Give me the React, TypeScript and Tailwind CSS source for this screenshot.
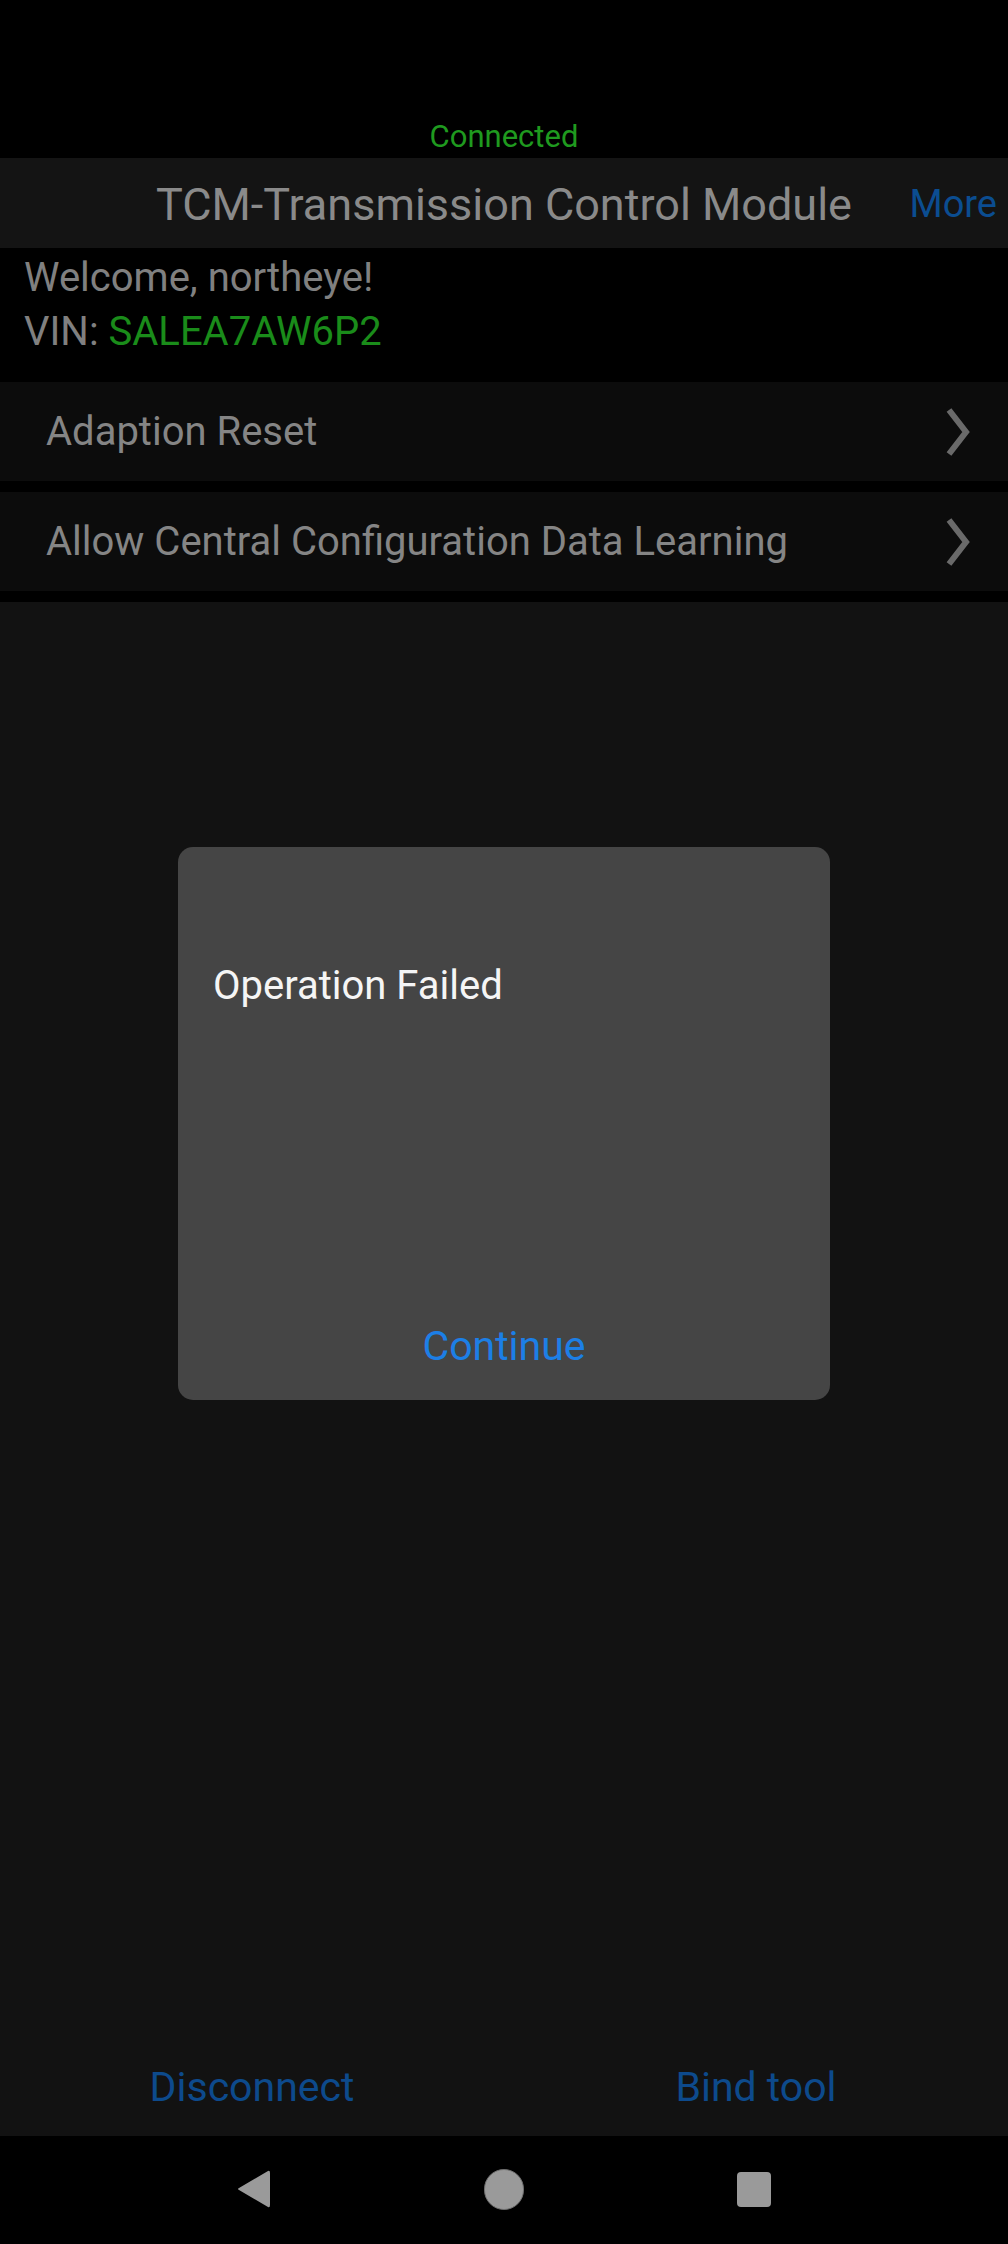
const font = { fontFamily: 'Roboto, "Noto Sans", sans-serif' };

const rows = ['Adaption Reset', 'Allow Central Configuration Data Learning'];

function RowChevron() {
  return (
    <svg width="26" height="48" viewBox="0 0 26 48" fill="none" className="shrink-0">
      <polyline points="4,2 21,24 4,46" stroke="#6a6a6a" strokeWidth="6" strokeLinejoin="miter" />
    </svg>
  );
}

export default function App() {
  return (
    <div className="relative w-[1008px] h-[2244px] flex flex-col bg-black overflow-hidden" style={font}>
      {/* status / connection */}
      <div className="h-[158px] shrink-0 pt-[121px] text-center">
        <p className="text-[31px] leading-[31px] text-[#1f9a1f]">Connected</p>
      </div>

      {/* header */}
      <div className="h-[90px] shrink-0 bg-[#141414] grid grid-cols-[1fr_auto_1fr] items-center">
        <div />
        <h1 className="text-[45px] leading-[45px] text-[#8a8a8a] whitespace-nowrap pt-[2px]">
          TCM-Transmission Control Module
        </h1>
        <div className="flex justify-end pr-[11px]">
          <span className="text-[38px] leading-[38px] text-[#0b4d91] pt-[2px]">More</span>
        </div>
      </div>

      {/* user info */}
      <div className="h-[134px] shrink-0 pl-[24px] pt-[3px]">
        <p className="text-[40px] leading-[54px] text-[#808080]">Welcome, northeye!</p>
        <p className="text-[40px] leading-[54px] text-[#808080]">
          VIN: <span className="text-[#1a8c1a]">SALEA7AW6P2</span>
        </p>
      </div>

      {/* function list */}
      <div className="shrink-0 flex flex-col gap-[11px] pb-[11px]">
        {rows.map((r) => (
          <div key={r} className="h-[99px] bg-[#0c0c0c] flex items-center justify-between pl-[46px] pr-[37px]">
            <span className="text-[40px] leading-[40px] text-[#858585]">{r}</span>
            <RowChevron />
          </div>
        ))}
      </div>

      {/* body + bottom actions */}
      <div className="flex-1 bg-[#121212] flex flex-col justify-end">
        <div className="grid grid-cols-2 pb-[28px]">
          <button className="text-[41px] leading-[41px] text-[#0d4a8c] text-center">Disconnect</button>
          <button className="text-[41px] leading-[41px] text-[#0d4a8c] text-center">Bind tool</button>
        </div>
      </div>

      {/* android nav bar */}
      <div className="h-[108px] shrink-0 bg-black flex items-center justify-center gap-[190px] pb-[2px]">
        <div className="w-[60px] flex justify-center">
          <svg width="36" height="40" viewBox="0 0 36 40">
            <path d="M32 2 Q34 1 34 4 L34 36 Q34 39 32 38 L3 21 Q1 20 3 19 Z" fill="#9a9a9a" />
          </svg>
        </div>
        <div className="w-[60px] flex justify-center">
          <div className="w-[40px] h-[41px] rounded-full bg-[#9a9a9a] border border-[#6e6e6e]" />
        </div>
        <div className="w-[60px] flex justify-center">
          <div className="w-[34px] h-[35px] rounded-[4px] bg-[#9a9a9a]" />
        </div>
      </div>

      {/* modal dialog */}
      <div className="absolute inset-0 flex items-center justify-center pt-[3px]">
        <div className="w-[652px] h-[553px] bg-[#454545] rounded-[15px] flex flex-col justify-between pt-[119px] pb-[33px]">
          <p className="pl-[35px] text-[40px] leading-[40px] text-[#f5f5f5]">Operation Failed</p>
          <button className="text-[41px] leading-[41px] text-[#1c7fe6] text-center">Continue</button>
        </div>
      </div>
    </div>
  );
}
